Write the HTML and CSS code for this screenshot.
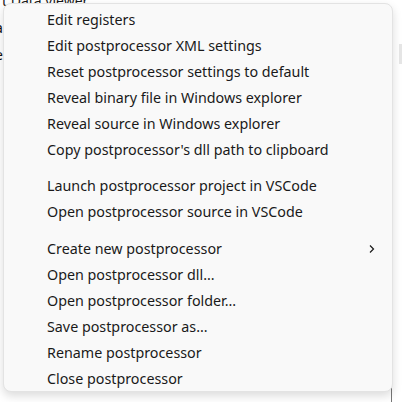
FILE: index.html
```html
<!DOCTYPE html>
<html>
<head>
<meta charset="utf-8">
<link rel="stylesheet" href="styles.css">
</head>
<body>
<div class="page">
  <div class="bg-title">t Data viewer</div>
  <div class="bg-left">
    <span>a</span>
    <span>e</span>
    <span>:</span>
  </div>
  <div class="bg-rightbar"></div>
  <div class="bg-rightline"></div>

  <div class="menu">
    <div class="item">Edit registers</div>
    <div class="item">Edit postprocessor XML settings</div>
    <div class="item">Reset postprocessor settings to default</div>
    <div class="item">Reveal binary file in Windows explorer</div>
    <div class="item">Reveal source in Windows explorer</div>
    <div class="item">Copy postprocessor's dll path to clipboard</div>
    <div class="sep"></div>
    <div class="item">Launch postprocessor project in VSCode</div>
    <div class="item">Open postprocessor source in VSCode</div>
    <div class="sep sep2"></div>
    <div class="item sub">Create new postprocessor
      <svg class="chev" width="8" height="10" viewBox="0 0 8 10"><path d="M2 1.5 L5.5 5 L2 8.5" fill="none" stroke="#1a1a1a" stroke-width="1.2"/></svg>
    </div>
    <div class="item">Open postprocessor dll...</div>
    <div class="item">Open postprocessor folder...</div>
    <div class="item">Save postprocessor as...</div>
    <div class="item">Rename postprocessor</div>
    <div class="item">Close postprocessor</div>
  </div>
</div>
</body>
</html>
```

FILE: styles.css
```css
html, body {
  margin: 0;
  padding: 0;
  background: #ffffff;
}
.page {
  position: relative;
  width: 402px;
  height: 402px;
  overflow: hidden;
  font-family: "Segoe UI", "Noto Sans", "Open Sans", sans-serif;
}
.bg-title {
  position: absolute;
  left: 2px;
  top: -9px;
  font-size: 14px;
  color: #1a1a1a;
}
.bg-left {
  position: absolute;
  left: -5px;
  top: 14px;
  display: flex;
  flex-direction: column;
  font-size: 14px;
  line-height: 27px;
  color: #111;
}
.bg-rightbar {
  position: absolute;
  left: 399px;
  top: 44px;
  width: 3px;
  height: 20px;
  background: #e6e6e6;
}
.bg-rightline {
  position: absolute;
  left: 391px;
  top: 380px;
  width: 1px;
  height: 22px;
  background: #777;
}
.menu {
  position: absolute;
  left: 3px;
  top: 3px;
  width: 390px;
  height: 389px;
  box-sizing: border-box;
  padding: 3px 0 3px 0;
  background: #f9f9f9;
  border: 1px solid #e3e3e3;
  border-radius: 8px;
  box-shadow: 0 4px 10px rgba(0,0,0,0.14);
  display: flex;
  flex-direction: column;
}
.item {
  height: 26px;
  line-height: 26px;
  padding-left: 43px;
  padding-right: 16px;
  font-size: 14.3px;
  color: #1a1a1a;
  white-space: nowrap;
  display: flex;
  align-items: center;
  justify-content: space-between;
}
.chev {
  display: block;
}
.sep {
  height: 1px;
  background: #dcdcdc;
  margin: 5px 9px 5px 47px;
}
.sep2 {
  margin-bottom: 6px;
}
```
